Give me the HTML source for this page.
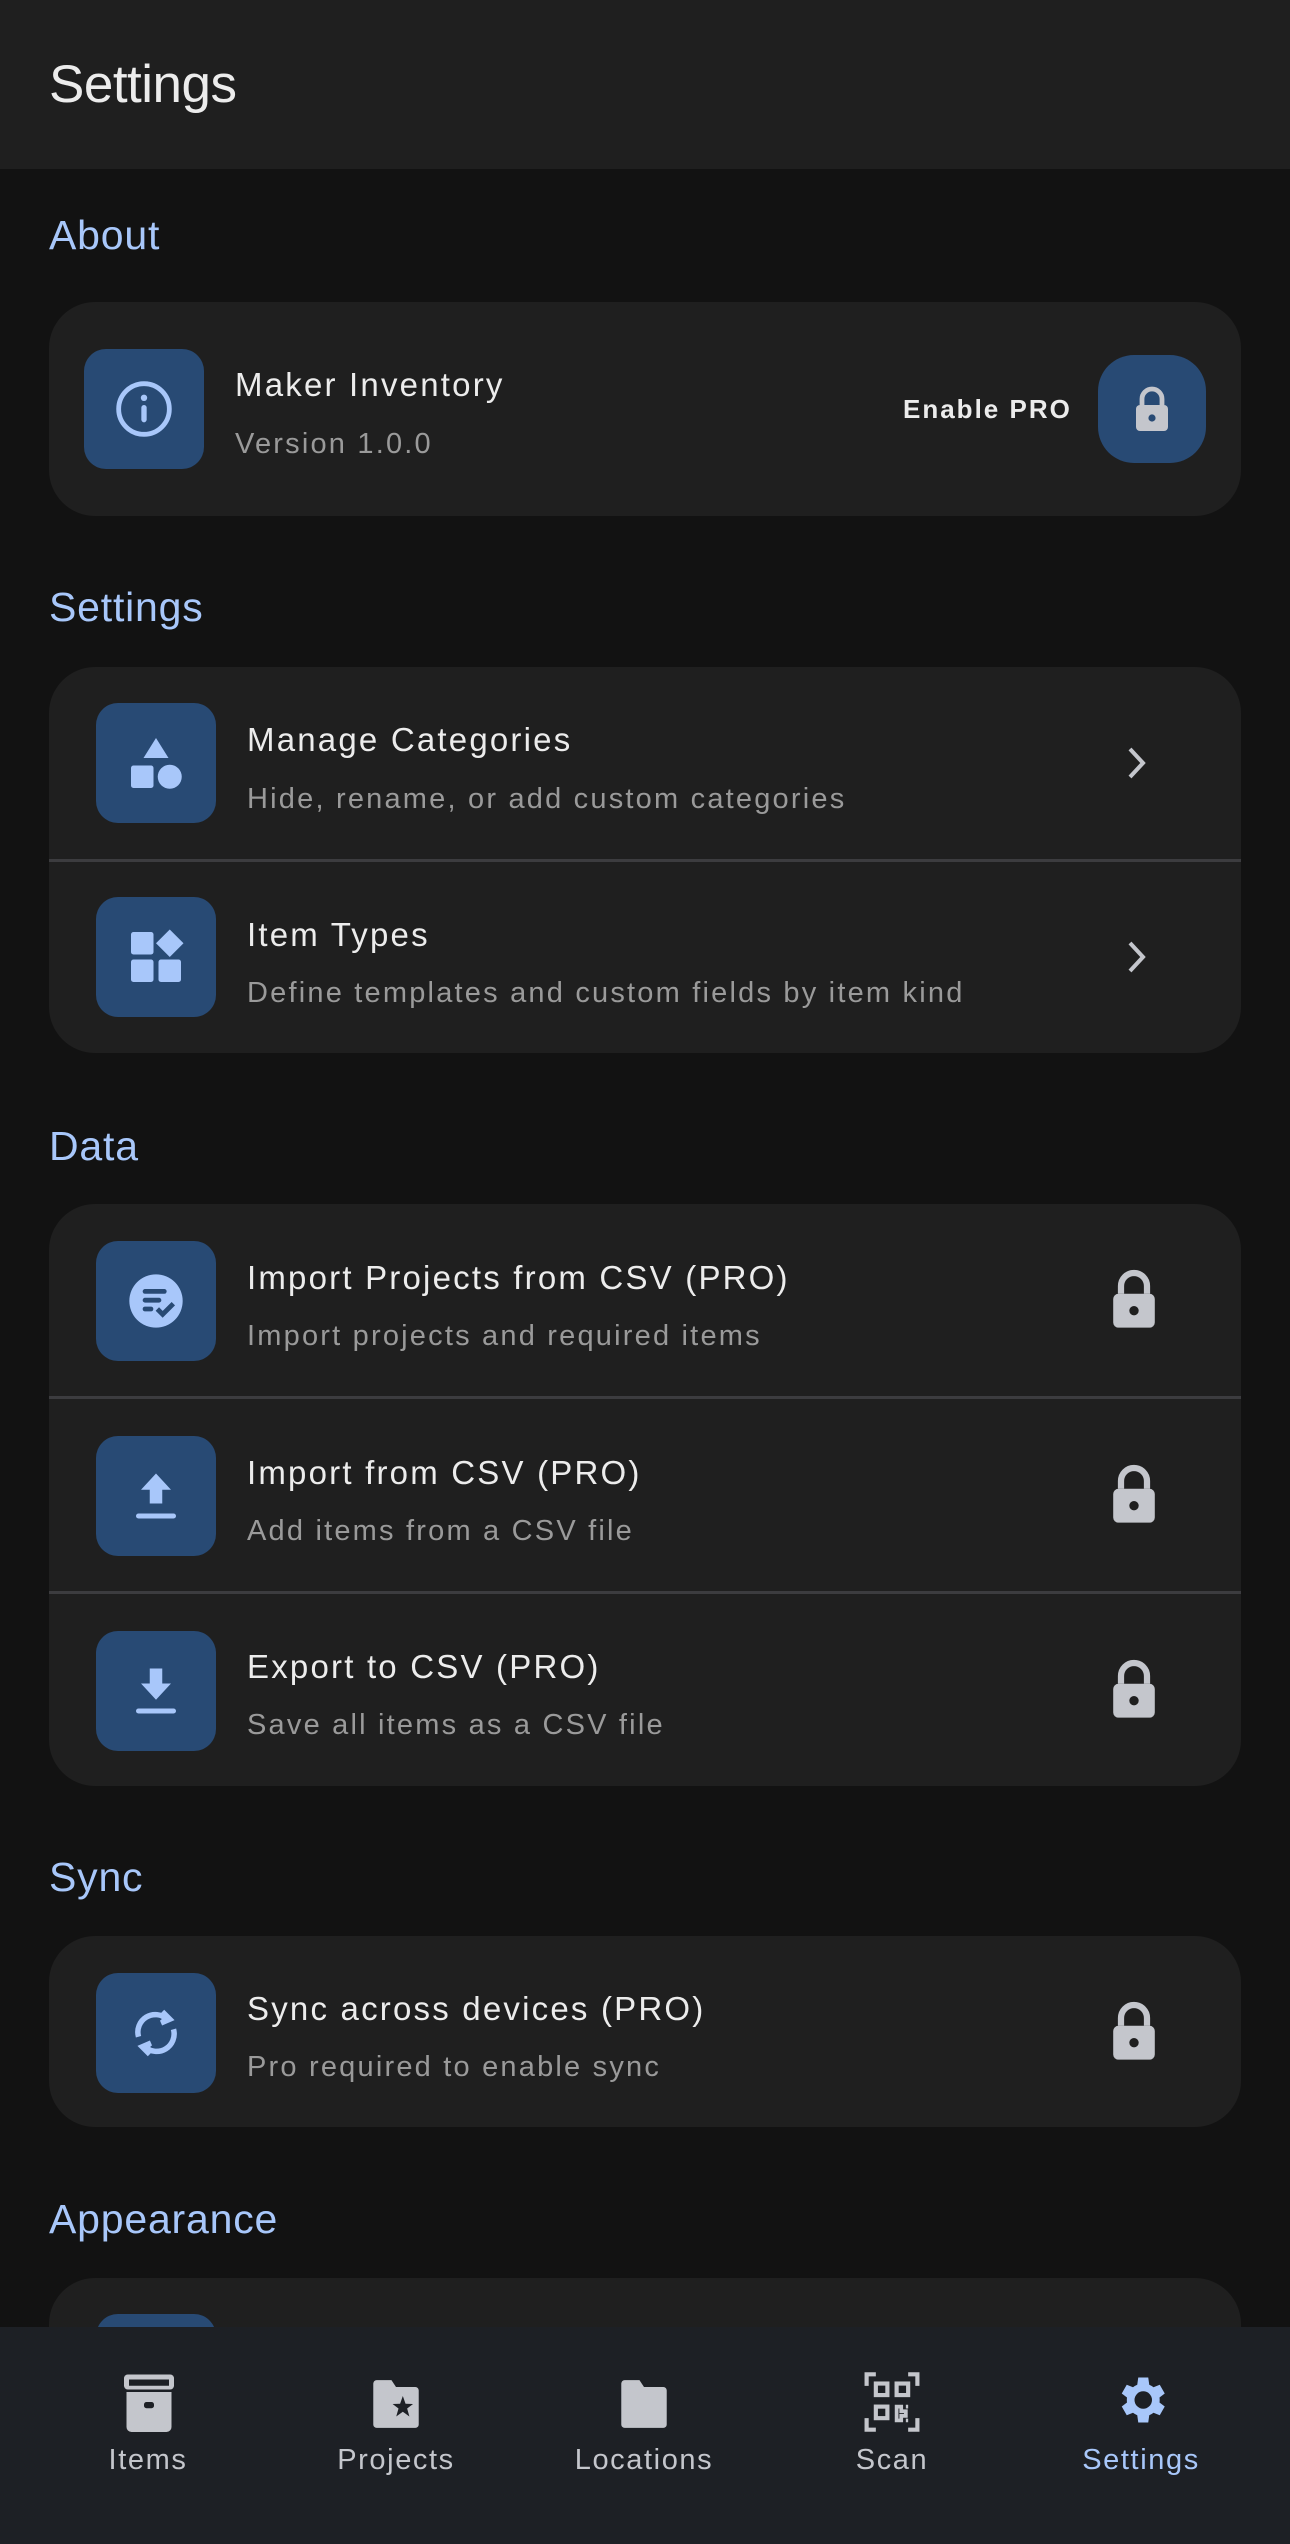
<!DOCTYPE html>
<html><head><meta charset="utf-8"><style>
*{margin:0;padding:0;box-sizing:border-box}
body{width:1290px;height:2544px;background:#121212;font-family:"Liberation Sans",sans-serif;position:relative;overflow:hidden;color:#e6e6e6}
.abs{position:absolute}
.hdr{left:0;top:0;width:1290px;height:169px;background:#1f1f1f}
.ttl{left:49px;top:54px;font-size:53px;color:#ececec;letter-spacing:-0.5px}
.sec{left:49px;font-size:41px;color:#a8c7fa;letter-spacing:0.8px}
.card{left:49px;width:1192px;background:#1f1f1f;border-radius:46px;overflow:hidden}
.ib{width:120px;height:120px;background:#284a74;border-radius:22px;display:flex;align-items:center;justify-content:center}
.t{font-size:33px;color:#ececec;letter-spacing:2.2px}
.s{font-size:29px;color:#9a9a9a;letter-spacing:2.2px}
.div{left:0;width:1192px;height:3px;background:#3c3c3f}
.nav{left:0;top:2327px;width:1290px;height:217px;background:#1d2025}
.ni{width:248px;text-align:center;font-size:29px;color:#c4c6cc;letter-spacing:1.6px}
</style></head><body>
<div class="abs hdr"></div>
<div class="abs ttl">Settings</div>

<div class="abs sec" style="top:212px">About</div>
<div class="abs card" style="top:302px;height:214px">
  <div class="abs ib" style="left:35px;top:47px"><svg width="64" height="64" viewBox="0 0 24 24"><circle cx="12" cy="12" r="9.5" fill="none" stroke="#a8c7fa" stroke-width="1.8"/><rect x="11" y="10.5" width="2" height="6.5" rx="1" fill="#a8c7fa"/><circle cx="12" cy="7.8" r="1.2" fill="#a8c7fa"/></svg></div>
  <div class="abs t" style="left:186px;top:64px">Maker Inventory</div>
  <div class="abs s" style="left:186px;top:126px">Version 1.0.0</div>
  <div class="abs" style="left:854px;top:92px;font-size:26px;font-weight:bold;letter-spacing:2px;color:#ececec">Enable PRO</div>
  <div class="abs" style="left:1049px;top:53px;width:108px;height:108px;background:#284a74;border-radius:36px;display:flex;align-items:center;justify-content:center"><svg width="40" height="48" viewBox="0 0 20 24"><path d="M5 10V7a5 5 0 0 1 10 0v3" fill="none" stroke="#c4c6cc" stroke-width="2.4"/><rect x="2" y="10" width="16" height="13" rx="2" fill="#c4c6cc"/><circle cx="10" cy="16.5" r="1.8" fill="#284a74"/></svg></div>
</div>

<div class="abs sec" style="top:584px">Settings</div>
<div class="abs card" style="top:667px;height:386px">
  <div class="abs ib" style="left:47px;top:36px"><svg width="60" height="60" viewBox="0 0 24 24" fill="#a8c7fa"><path d="M12 2l5 8H7z"/><rect x="2" y="13" width="9" height="9" rx="1"/><circle cx="17.5" cy="17.5" r="4.8"/></svg></div>
  <div class="abs t" style="left:198px;top:54px">Manage Categories</div>
  <div class="abs s" style="left:198px;top:116px">Hide, rename, or add custom categories</div>
  <svg class="abs" style="left:1072px;top:76px" width="30" height="40" viewBox="0 0 30 40"><path d="M9 6l13 14-13 14" fill="none" stroke="#c4c6cc" stroke-width="4"/></svg>
  <div class="abs div" style="top:192px"></div>
  <div class="abs ib" style="left:47px;top:230px"><svg width="60" height="60" viewBox="0 0 24 24" fill="#a8c7fa"><rect x="2" y="2" width="9" height="9" rx="1"/><path d="M17.5 1l5.5 5.5-5.5 5.5-5.5-5.5z"/><rect x="2" y="13" width="9" height="9" rx="1"/><rect x="13" y="13" width="9" height="9" rx="1"/></svg></div>
  <div class="abs t" style="left:198px;top:249px">Item Types</div>
  <div class="abs s" style="left:198px;top:310px">Define templates and custom fields by item kind</div>
  <svg class="abs" style="left:1072px;top:270px" width="30" height="40" viewBox="0 0 30 40"><path d="M9 6l13 14-13 14" fill="none" stroke="#c4c6cc" stroke-width="4"/></svg>
</div>

<div class="abs sec" style="top:1123px">Data</div>
<div class="abs card" style="top:1204px;height:582px">
  <div class="abs ib" style="left:47px;top:37px"><svg width="64" height="64" viewBox="0 0 24 24"><circle cx="12" cy="12" r="10" fill="#a8c7fa"/><rect x="7" y="7.5" width="9" height="1.8" rx=".9" fill="#284a74"/><rect x="7" y="10.8" width="7" height="1.8" rx=".9" fill="#284a74"/><rect x="7" y="14.1" width="4" height="1.8" rx=".9" fill="#284a74"/><path d="M12.5 15l2 2 4-4" fill="none" stroke="#284a74" stroke-width="1.8"/></svg></div>
  <div class="abs t" style="left:198px;top:55px">Import Projects from CSV (PRO)</div>
  <div class="abs s" style="left:198px;top:116px">Import projects and required items</div>
  <svg class="abs" style="left:1059px;top:63px" width="52" height="64" viewBox="0 0 20 24"><path d="M5 10V7a5 5 0 0 1 10 0v3" fill="none" stroke="#c4c6cc" stroke-width="2.4"/><rect x="2" y="10" width="16" height="13" rx="2" fill="#c4c6cc"/><circle cx="10" cy="16.5" r="1.8" fill="#1f1f1f"/></svg>
  <div class="abs div" style="top:192px"></div>
  <div class="abs ib" style="left:47px;top:232px"><svg width="60" height="60" viewBox="0 0 24 24" fill="#a8c7fa"><path d="M12 3l6 6.5h-3.5V15h-5V9.5H6z"/><rect x="4" y="19" width="16" height="2" rx="1"/></svg></div>
  <div class="abs t" style="left:198px;top:250px">Import from CSV (PRO)</div>
  <div class="abs s" style="left:198px;top:311px">Add items from a CSV file</div>
  <svg class="abs" style="left:1059px;top:258px" width="52" height="64" viewBox="0 0 20 24"><path d="M5 10V7a5 5 0 0 1 10 0v3" fill="none" stroke="#c4c6cc" stroke-width="2.4"/><rect x="2" y="10" width="16" height="13" rx="2" fill="#c4c6cc"/><circle cx="10" cy="16.5" r="1.8" fill="#1f1f1f"/></svg>
  <div class="abs div" style="top:387px"></div>
  <div class="abs ib" style="left:47px;top:427px"><svg width="60" height="60" viewBox="0 0 24 24" fill="#a8c7fa"><path d="M9.5 3h5v6H18l-6 6.5L6 9h3.5z"/><rect x="4" y="19" width="16" height="2" rx="1"/></svg></div>
  <div class="abs t" style="left:198px;top:444px">Export to CSV (PRO)</div>
  <div class="abs s" style="left:198px;top:505px">Save all items as a CSV file</div>
  <svg class="abs" style="left:1059px;top:453px" width="52" height="64" viewBox="0 0 20 24"><path d="M5 10V7a5 5 0 0 1 10 0v3" fill="none" stroke="#c4c6cc" stroke-width="2.4"/><rect x="2" y="10" width="16" height="13" rx="2" fill="#c4c6cc"/><circle cx="10" cy="16.5" r="1.8" fill="#1f1f1f"/></svg>
</div>

<div class="abs sec" style="top:1854px">Sync</div>
<div class="abs card" style="top:1936px;height:191px">
  <div class="abs ib" style="left:47px;top:37px"><svg width="60" height="60" viewBox="0 0 24 24" fill="none" stroke="#a8c7fa" stroke-width="2.2"><path d="M5 13.5A7 7 0 0 1 16.5 6.5"/><path d="M19 10.5A7 7 0 0 1 7.5 17.5"/><path d="M14.5 3.5l3 3-3.5 1.5" fill="#a8c7fa"/><path d="M9.5 20.5l-3-3 3.5-1.5" fill="#a8c7fa"/></svg></div>
  <div class="abs t" style="left:198px;top:54px">Sync across devices (PRO)</div>
  <div class="abs s" style="left:198px;top:115px">Pro required to enable sync</div>
  <svg class="abs" style="left:1059px;top:63px" width="52" height="64" viewBox="0 0 20 24"><path d="M5 10V7a5 5 0 0 1 10 0v3" fill="none" stroke="#c4c6cc" stroke-width="2.4"/><rect x="2" y="10" width="16" height="13" rx="2" fill="#c4c6cc"/><circle cx="10" cy="16.5" r="1.8" fill="#1f1f1f"/></svg>
</div>

<div class="abs sec" style="top:2196px">Appearance</div>
<div class="abs card" style="top:2278px;height:200px">
  <div class="abs ib" style="left:47px;top:36px"></div>
</div>

<div class="abs nav">
  <div class="abs" style="left:121px;top:45px"><svg width="56" height="60" viewBox="0 0 22 24" fill="#c4c6cc"><rect x="1" y="1" width="20" height="6" rx="1.5"/><rect x="3" y="3" width="16" height="2.5" fill="#1d2025"/><path d="M2 8h18v14a2 2 0 0 1-2 2H4a2 2 0 0 1-2-2z"/><rect x="9" y="12" width="4" height="2.5" rx="1" fill="#1d2025"/></svg></div>
  <div class="abs" style="left:368px;top:52px"><svg width="56" height="50" viewBox="0 0 24 22" fill="#c4c6cc"><path d="M2 2a1.5 1.5 0 0 1 1.5-1.5H10l2 3h8.5A1.5 1.5 0 0 1 22 5v15a1.5 1.5 0 0 1-1.5 1.5h-17A1.5 1.5 0 0 1 2 20z"/><path d="M15 7.5l1.2 3.4 3.3.1-2.6 2 1 3.5-2.9-2.1-2.9 2.1 1-3.5-2.6-2 3.3-.1z" fill="#1d2025"/></svg></div>
  <div class="abs" style="left:616px;top:52px"><svg width="56" height="50" viewBox="0 0 24 22" fill="#c4c6cc"><path d="M2 2a1.5 1.5 0 0 1 1.5-1.5H10l2 3h8.5A1.5 1.5 0 0 1 22 5v15a1.5 1.5 0 0 1-1.5 1.5h-17A1.5 1.5 0 0 1 2 20z"/></svg></div>
  <div class="abs" style="left:864px;top:45px"><svg width="56" height="60" viewBox="0 0 24 26" fill="none" stroke="#c4c6cc" stroke-width="1.8"><path d="M1 6V1h4M19 1h4v5M23 20v5h-4M5 25H1v-5"/><rect x="5" y="5" width="5" height="5"/><rect x="14" y="5" width="5" height="5"/><rect x="5" y="15" width="5" height="5"/><path d="M14 15h2v2h2v2h-2v2h-2zM18 15h1M18 21h1" stroke-width="1.6"/></svg></div>
  <div class="abs" style="left:1111px;top:42px"><svg width="60" height="62" viewBox="0 0 24 24" fill="#a8c7fa"><path d="M19.4 13a7.6 7.6 0 0 0 0-2l2.1-1.6-2-3.5-2.5 1a7.5 7.5 0 0 0-1.7-1L14.9 3h-4l-.4 2.9a7.5 7.5 0 0 0-1.7 1l-2.5-1-2 3.5L6.4 11a7.6 7.6 0 0 0 0 2l-2.1 1.6 2 3.5 2.5-1a7.5 7.5 0 0 0 1.7 1l.4 2.9h4l.4-2.9a7.5 7.5 0 0 0 1.7-1l2.5 1 2-3.5zM12.9 15.5a3.5 3.5 0 1 1 0-7 3.5 3.5 0 0 1 0 7z"/></svg></div>
  <div class="abs ni" style="left:24px;top:117px">Items</div>
  <div class="abs ni" style="left:272px;top:117px">Projects</div>
  <div class="abs ni" style="left:520px;top:117px">Locations</div>
  <div class="abs ni" style="left:768px;top:117px">Scan</div>
  <div class="abs ni" style="left:1017px;top:117px;color:#a8c7fa">Settings</div>
</div>
</body></html>
